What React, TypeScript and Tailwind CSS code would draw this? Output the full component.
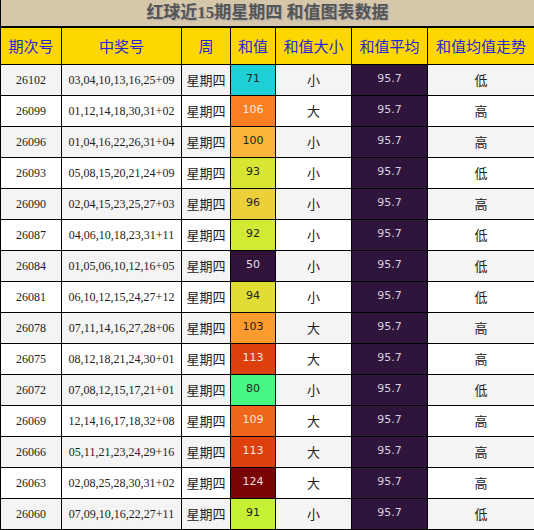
import React from 'react';

type Row = { no: string; nums: string; sum: number; cls: string; size: string; trend: string };

const rows: Row[] = [
  { no: '26102', nums: '03,04,10,13,16,25+09', sum: 71, cls: 'bg-[#1ecfd6] text-[#222]', size: '小', trend: '低' },
  { no: '26099', nums: '01,12,14,18,30,31+02', sum: 106, cls: 'bg-[#fa7f22] text-[#f3e8e0]', size: '大', trend: '高' },
  { no: '26096', nums: '01,04,16,22,26,31+04', sum: 100, cls: 'bg-[#fbb53a] text-[#222]', size: '小', trend: '高' },
  { no: '26093', nums: '05,08,15,20,21,24+09', sum: 93, cls: 'bg-[#d8e533] text-[#222]', size: '小', trend: '低' },
  { no: '26090', nums: '02,04,15,23,25,27+03', sum: 96, cls: 'bg-[#ecd03a] text-[#222]', size: '小', trend: '高' },
  { no: '26087', nums: '04,06,10,18,23,31+11', sum: 92, cls: 'bg-[#d2ea34] text-[#222]', size: '小', trend: '低' },
  { no: '26084', nums: '01,05,06,10,12,16+05', sum: 50, cls: 'bg-[#30123b] text-[#e6e0ea]', size: '小', trend: '低' },
  { no: '26081', nums: '06,10,12,15,24,27+12', sum: 94, cls: 'bg-[#e0de35] text-[#222]', size: '小', trend: '低' },
  { no: '26078', nums: '07,11,14,16,27,28+06', sum: 103, cls: 'bg-[#fd9b2d] text-[#222]', size: '大', trend: '高' },
  { no: '26075', nums: '08,12,18,21,24,30+01', sum: 113, cls: 'bg-[#dd400c] text-[#f6e4dc]', size: '大', trend: '高' },
  { no: '26072', nums: '07,08,12,15,17,21+01', sum: 80, cls: 'bg-[#48f884] text-[#222]', size: '小', trend: '低' },
  { no: '26069', nums: '12,14,16,17,18,32+08', sum: 109, cls: 'bg-[#ef6519] text-[#f6e4dc]', size: '大', trend: '高' },
  { no: '26066', nums: '05,11,21,23,24,29+16', sum: 113, cls: 'bg-[#dd400c] text-[#f6e4dc]', size: '大', trend: '高' },
  { no: '26063', nums: '02,08,25,28,30,31+02', sum: 124, cls: 'bg-[#7a0403] text-[#f0dcdc]', size: '大', trend: '高' },
  { no: '26060', nums: '07,09,10,16,22,27+11', sum: 91, cls: 'bg-[#c6f034] text-[#222]', size: '小', trend: '低' },
];

const headers = ['期次号', '中奖号', '周', '和值', '和值大小', '和值平均', '和值均值走势'];

export default function App() {
  return (
    <div className="w-[534px] h-[530px] overflow-hidden bg-white">
      <table className="w-[534px] table-fixed border-collapse font-['Liberation_Serif','Noto_Sans_CJK_SC',serif] text-[12px] text-[#222]">
        <colgroup>
          <col className="w-[61px]" />
          <col className="w-[120px]" />
          <col className="w-[49px]" />
          <col className="w-[45px]" />
          <col className="w-[76px]" />
          <col className="w-[76px]" />
          <col className="w-[107px]" />
        </colgroup>
        <thead>
          <tr className="h-[27px]">
            <th
              colSpan={7}
              className="border-x border-b-2 border-black bg-[#d6c6aa] p-0 text-center text-[17px] font-bold text-[#555] [text-shadow:1px_1px_1px_#aaa]"
            >
              红球近15期星期四 和值图表数据
            </th>
          </tr>
          <tr className="h-[37px]">
            {headers.map((h) => (
              <th
                key={h}
                className="border border-black bg-[#ffd700] p-0 text-center text-[15px] font-normal text-[#2424dc] font-['Noto_Sans_CJK_SC',sans-serif]"
              >
                {h}
              </th>
            ))}
          </tr>
        </thead>
        <tbody>
          {rows.map((r, i) => (
            <tr key={r.no} className={`h-[31px] ${i % 2 === 0 ? 'bg-[#f4f4f4]' : 'bg-white'}`}>
              <td className="border border-black p-0 text-center">{r.no}</td>
              <td className="border border-black p-0 text-center">{r.nums}</td>
              <td className="border border-black p-0 text-center text-[13px] font-['Noto_Sans_CJK_SC',sans-serif]">星期四</td>
              <td className={`border border-black p-0 text-center text-[11px] font-['DejaVu_Sans',sans-serif] ${r.cls}`}>{r.sum}</td>
              <td className="border border-black p-0 text-center text-[13px] font-['Noto_Sans_CJK_SC',sans-serif]">{r.size}</td>
              <td className="border border-black bg-[#2f153b] p-0 text-center text-[11px] text-[#d8d0dc] font-['DejaVu_Sans',sans-serif]">95.7</td>
              <td className="border border-black p-0 text-center text-[13px] font-['Noto_Sans_CJK_SC',sans-serif]">{r.trend}</td>
            </tr>
          ))}
        </tbody>
      </table>
    </div>
  );
}
